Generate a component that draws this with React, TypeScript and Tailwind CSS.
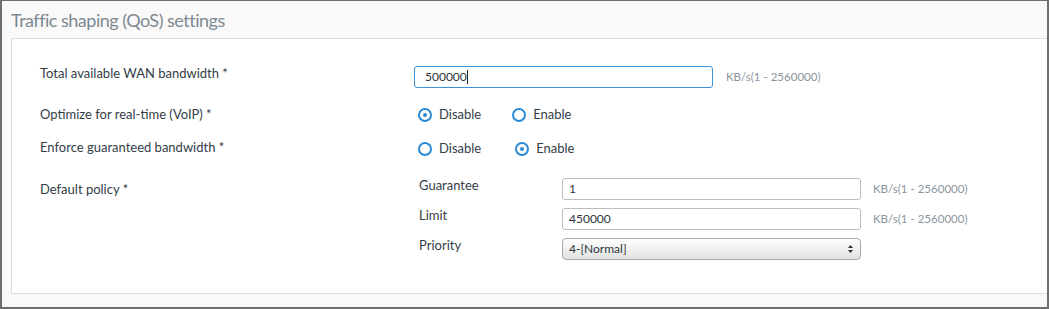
import React from "react";

const font = { fontFamily: "Lato, 'Open Sans', sans-serif" };

function Radio({ checked, label }: { checked: boolean; label: string }) {
    return (
        <div className="flex items-center">
            <span className="flex items-center justify-center w-[14px] h-[14px] rounded-full border-2 border-[#2a8ad6] bg-white">
                {checked && <span className="w-[4px] h-[4px] rounded-full bg-[#2a8ad6]" />}
            </span>
            <span className="ml-[7px] text-[13px] text-[#333d46]">{label}</span>
        </div>
    );
}

function Field({ value }: { value: string }) {
    return (
        <div className="flex items-center w-[299px] h-[22px] border border-[#bdbdbd] rounded-[3px] bg-white pl-[6px] text-[12px] text-[#2d353c]">
            {value}
        </div>
    );
}

const unit = "text-[11.5px] text-[#8b959e]";
const label = "text-[13px] text-[#333d46]";

export default function App() {
    return (
        <div style={font} className="w-[1049px] h-[309px] border-2 border-t border-[#6e6e6e] bg-[#f9f9f9] flex flex-col">
            <div className="h-[37px] pl-[9px] pt-[2px] flex items-center text-[18px] tracking-[-0.5px] text-[#7d8992]">
                Traffic shaping (QoS) settings
            </div>

            <div className="ml-[9px] h-[256px] bg-white border border-r-0 border-[#dddddd] rounded-tl-[3px] pl-[28px]">
                {/* WAN bandwidth */}
                <div className="flex items-start mt-[26px]">
                    <div className={`w-[374px] leading-[16px] ${label}`}>Total available WAN bandwidth *</div>
                    <div className="flex items-center mt-[1px]">
                        <div className="flex items-center w-[299px] h-[22px] border border-[#3d93da] rounded-[3px] bg-white pl-[10px] text-[12px] text-[#2d353c]">
                            500000<span className="w-[1px] h-[14px] bg-[#222]" />
                        </div>
                        <span className={`ml-[13px] ${unit}`}>KB/s(1 - 2560000)</span>
                    </div>
                </div>

                {/* VoIP */}
                <div className="flex items-center mt-[19px] h-[16px]">
                    <div className={`w-[374px] -mt-[1px] ${label}`}>Optimize for real-time (VoIP) *</div>
                    <div className="flex items-center pl-[4px]">
                        <Radio checked label="Disable" />
                        <div className="ml-[31px]"><Radio checked={false} label="Enable" /></div>
                    </div>
                </div>

                {/* Guaranteed bandwidth */}
                <div className="flex items-center mt-[18px] h-[16px]">
                    <div className={`w-[374px] -mt-[3px] ${label}`}>Enforce guaranteed bandwidth *</div>
                    <div className="flex items-center pl-[4px]">
                        <Radio checked={false} label="Disable" />
                        <div className="ml-[34px]"><Radio checked label="Enable" /></div>
                    </div>
                </div>

                {/* Default policy */}
                <div className="flex items-start mt-[21px]">
                    <div className={`w-[374px] pt-[2px] ${label}`}>Default policy *</div>
                    <div className="flex flex-col gap-[8px] pl-[5px]">
                        <div className="flex items-center">
                            <div className={`w-[143px] -mt-[6px] ${label}`}>Guarantee</div>
                            <Field value="1" />
                            <span className={`ml-[12px] ${unit}`}>KB/s(1 - 2560000)</span>
                        </div>
                        <div className="flex items-center">
                            <div className={`w-[143px] -mt-[6px] ${label}`}>Limit</div>
                            <Field value="450000" />
                            <span className={`ml-[12px] ${unit}`}>KB/s(1 - 2560000)</span>
                        </div>
                        <div className="flex items-center">
                            <div className={`w-[143px] -mt-[6px] ${label}`}>Priority</div>
                            <div className="flex items-center justify-between w-[299px] h-[22px] border border-[#a8a8a8] rounded-[4px] bg-gradient-to-b from-white to-[#e2e2e2] pl-[6px] pr-[6px] text-[12px] text-[#2d353c]">
                                <span>4-[Normal]</span>
                                <svg width="7" height="10" viewBox="0 0 7 10">
                                    <path d="M3.5 1 L6 4 H1 Z" fill="#333" />
                                    <path d="M3.5 9 L6 6 H1 Z" fill="#333" />
                                </svg>
                            </div>
                        </div>
                    </div>
                </div>
            </div>
        </div>
    );
}
